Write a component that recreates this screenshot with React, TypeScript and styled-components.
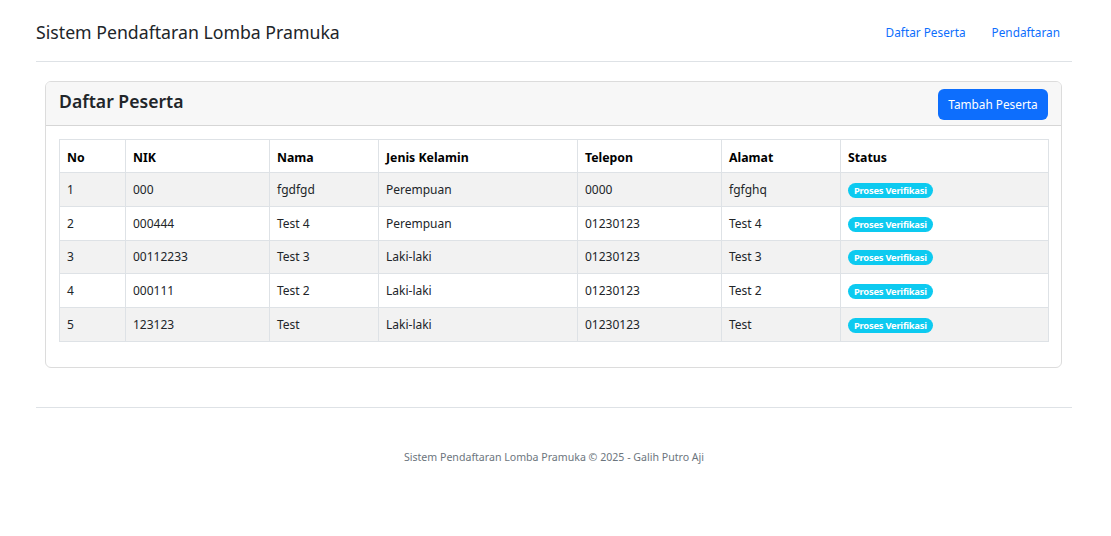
import React from "react";
import styled, { createGlobalStyle } from "styled-components";

const GlobalStyle = createGlobalStyle`
  * { box-sizing: border-box; }
  body {
    margin: 0;
    background: #fff;
    color: #212529;
    font-family: "Noto Sans", "Open Sans", sans-serif;
  }
`;

type Peserta = {
  no: number;
  nik: string;
  nama: string;
  jk: string;
  telp: string;
  alamat: string;
  status: string;
};

const peserta: Peserta[] = [
  { no: 1, nik: "000", nama: "fgdfgd", jk: "Perempuan", telp: "0000", alamat: "fgfghq", status: "Proses Verifikasi" },
  { no: 2, nik: "000444", nama: "Test 4", jk: "Perempuan", telp: "01230123", alamat: "Test 4", status: "Proses Verifikasi" },
  { no: 3, nik: "00112233", nama: "Test 3", jk: "Laki-laki", telp: "01230123", alamat: "Test 3", status: "Proses Verifikasi" },
  { no: 4, nik: "000111", nama: "Test 2", jk: "Laki-laki", telp: "01230123", alamat: "Test 2", status: "Proses Verifikasi" },
  { no: 5, nik: "123123", nama: "Test", jk: "Laki-laki", telp: "01230123", alamat: "Test", status: "Proses Verifikasi" },
];

const kolom = [
  { label: "No", width: 66 },
  { label: "NIK", width: 144 },
  { label: "Nama", width: 109 },
  { label: "Jenis Kelamin", width: 199 },
  { label: "Telepon", width: 144 },
  { label: "Alamat", width: 119 },
  { label: "Status", width: 208 },
];

export default function App() {
  return (
    <>
      <GlobalStyle />
      <Page>
        <Header>
          <Brand>Sistem Pendaftaran Lomba Pramuka</Brand>
          <Nav>
            <NavLink href="#">Daftar Peserta</NavLink>
            <NavLink href="#">Pendaftaran</NavLink>
          </Nav>
        </Header>

        <Card>
          <CardHeader>
            <CardTitle>Daftar Peserta</CardTitle>
            <PrimaryButton>Tambah Peserta</PrimaryButton>
          </CardHeader>
          <CardBody>
            <Table>
              <colgroup>
                {kolom.map((k) => (
                  <col key={k.label} style={{ width: k.width }} />
                ))}
              </colgroup>
              <thead>
                <tr>
                  {kolom.map((k) => (
                    <Th key={k.label}>{k.label}</Th>
                  ))}
                </tr>
              </thead>
              <tbody>
                {peserta.map((p, i) => (
                  <Row key={p.no} $striped={i % 2 === 0}>
                    <Td>{p.no}</Td>
                    <Td>{p.nik}</Td>
                    <Td>{p.nama}</Td>
                    <Td>{p.jk}</Td>
                    <Td>{p.telp}</Td>
                    <Td>{p.alamat}</Td>
                    <Td>
                      <Badge>{p.status}</Badge>
                    </Td>
                  </Row>
                ))}
              </tbody>
            </Table>
          </CardBody>
        </Card>

        <Footer>
          <FooterText>Sistem Pendaftaran Lomba Pramuka © 2025 - Galih Putro Aji</FooterText>
        </Footer>
      </Page>
    </>
  );
}

const Page = styled.div`
  margin: 0 39px 0 36px;
`;

const Header = styled.header`
  height: 62px;
  display: flex;
  align-items: center;
  justify-content: space-between;
  border-bottom: 1px solid #dee2e6;
  padding-top: 2px;
`;

const Brand = styled.div`
  font-size: 17.7px;
  color: #212529;
`;

const Nav = styled.nav`
  display: flex;
  gap: 26px;
  padding-right: 12px;
`;

const NavLink = styled.a`
  font-size: 11.8px;
  color: #0d6efd;
  text-decoration: none;
`;

const Card = styled.section`
  margin: 19px 10px 0 9px;
  border: 1px solid #dcdcdc;
  border-radius: 6px;
  overflow: hidden;
`;

const CardHeader = styled.div`
  height: 44px;
  display: flex;
  align-items: center;
  justify-content: space-between;
  padding: 0 13px 0 13px;
  background: #f7f7f7;
  border-bottom: 1px solid #d6d6d6;
`;

const CardTitle = styled.h2`
  margin: 0 0 6px 0;
  font-size: 17.6px;
  font-weight: 600;
  color: #212529;
`;

const PrimaryButton = styled.button`
  height: 31px;
  width: 110px;
  margin-top: 1px;
  border: none;
  border-radius: 6px;
  background: #0d6efd;
  color: #fff;
  font-family: inherit;
  font-size: 11.8px;
  padding: 0;
`;

const CardBody = styled.div`
  padding: 13px 13px 25px 13px;
`;

const Table = styled.table`
  width: 100%;
  border-collapse: collapse;
  table-layout: fixed;
  font-size: 12px;
`;

const Th = styled.th`
  height: 33px;
  text-align: left;
  font-weight: 700;
  font-size: 12.3px;
  padding: 2px 7px 0 7px;
  border: 1px solid #dee2e6;
  color: #000;
`;

const Row = styled.tr<{ $striped: boolean }>`
  background: ${(p) => (p.$striped ? "#f2f2f2" : "#fff")};
`;

const Td = styled.td`
  height: 33.8px;
  padding: 0 7px;
  border: 1px solid #dee2e6;
  color: #212529;
  vertical-align: middle;
`;

const Badge = styled.span`
  display: inline-block;
  background: #0dcaf0;
  color: #fff;
  font-size: 9.4px;
  font-weight: 700;
  line-height: 15px;
  padding: 0 6px;
  border-radius: 8px;
  letter-spacing: -0.25px;
`;

const Footer = styled.footer`
  margin-top: 39px;
  border-top: 1px solid #dee2e6;
  padding-top: 42px;
  text-align: center;
`;

const FooterText = styled.p`
  margin: 0;
  font-size: 10.6px;
  color: #6c757d;
`;
